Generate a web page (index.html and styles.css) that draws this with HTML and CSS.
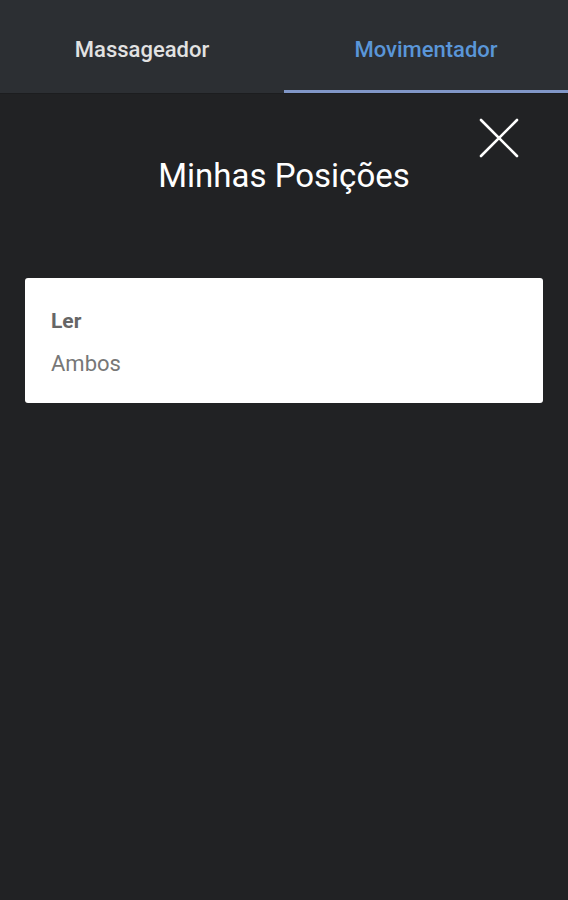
FILE: index.html
```html
<!DOCTYPE html>
<html lang="pt">
<head>
<meta charset="UTF-8">
<meta name="viewport" content="width=device-width, initial-scale=1.0">
<title>Minhas Posições</title>
<link rel="stylesheet" href="styles.css">
</head>
<body>
<div class="tabs">
    <div class="tab">Massageador</div>
    <div class="tab active">Movimentador</div>
</div>

<div class="page">
    <div class="header">
        <h2>Minhas Posições</h2>
        <button class="close" aria-label="Fechar">
            <svg width="40" height="40" viewBox="0 0 40 40">
                <path d="M2 2 L38 38 M38 2 L2 38" stroke="#fff" stroke-width="2.6" stroke-linecap="round" fill="none"/>
            </svg>
        </button>
    </div>

    <div class="card">
        <p class="card-title">Ler</p>
        <p class="card-sub">Ambos</p>
    </div>
</div>
</body>
</html>
```

FILE: styles.css
```css
* {
    margin: 0;
    padding: 0;
    box-sizing: border-box;
}

body {
    background: #212224;
    font-family: Roboto, "Liberation Sans", sans-serif;
    height: 900px;
}

/* abas */
.tabs {
    display: flex;
    height: 94px;
    background: #2c2f33;
    border-bottom: 1px solid #1c1d1f;
}

.tab {
    flex: 1;
    display: flex;
    justify-content: center;
    align-items: center;
    padding-top: 8px;
    color: #e2e2e2;
    font-size: 22px;
    font-weight: 500;
    border-bottom: 3px solid transparent;
}

.tab.active {
    color: #5a96d8;
    border-bottom-color: #8197c8;
}

.page {
    padding: 0 25px;
}

.header {
    position: relative;
    height: 184px;
    padding-top: 62px;
    text-align: center;
}

.header h2 {
    color: #fff;
    font-size: 33px;
    font-weight: 400;
}

.close {
    position: absolute;
    top: 24px;
    right: 24px;
    width: 40px;
    height: 40px;
    background: none;
    border: none;
}

.close svg {
    display: block;
}

/* cartão */
.card {
    background: #fff;
    border-radius: 3px;
    height: 125px;
    padding: 29px 26px 0;
}

.card-title {
    color: #666;
    font-size: 21px;
    font-weight: 700;
    line-height: 28px;
}

.card-sub {
    color: #777;
    font-size: 22px;
    line-height: 28px;
    margin-top: 15px;
}
```
